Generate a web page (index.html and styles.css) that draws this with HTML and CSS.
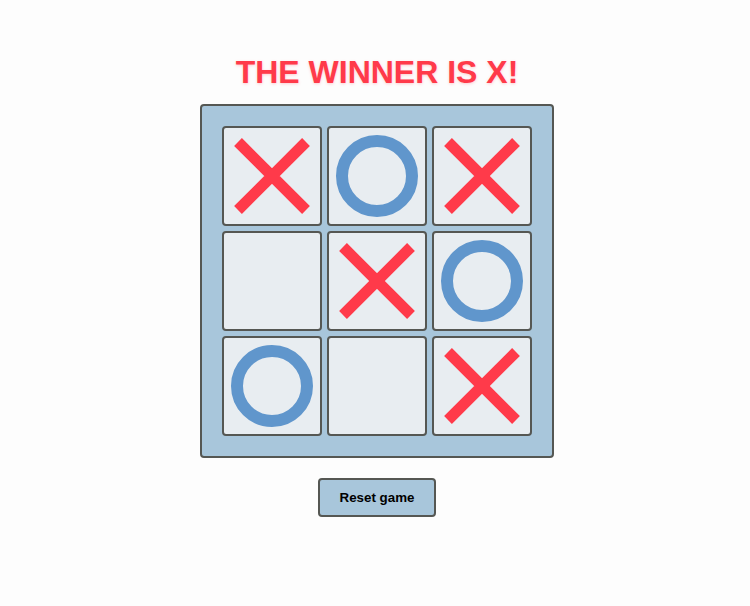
FILE: index.html
```html
<!DOCTYPE html>
<html>
<head>
<meta charset="utf-8">
<link rel="stylesheet" href="styles.css">
</head>
<body>
<main class="game">
  <h1 class="status">THE WINNER IS X!</h1>
  <div class="board">
    <div class="cell"><svg class="mark" viewBox="0 0 96 96"><path class="x" d="M14 14L82 82M82 14L14 82"/></svg></div>
    <div class="cell"><svg class="mark" viewBox="0 0 96 96"><circle class="o" cx="48" cy="48" r="35"/></svg></div>
    <div class="cell"><svg class="mark" viewBox="0 0 96 96"><path class="x" d="M14 14L82 82M82 14L14 82"/></svg></div>
    <div class="cell"></div>
    <div class="cell"><svg class="mark" viewBox="0 0 96 96"><path class="x" d="M14 14L82 82M82 14L14 82"/></svg></div>
    <div class="cell"><svg class="mark" viewBox="0 0 96 96"><circle class="o" cx="48" cy="48" r="35"/></svg></div>
    <div class="cell"><svg class="mark" viewBox="0 0 96 96"><circle class="o" cx="48" cy="48" r="35"/></svg></div>
    <div class="cell"></div>
    <div class="cell"><svg class="mark" viewBox="0 0 96 96"><path class="x" d="M14 14L82 82M82 14L14 82"/></svg></div>
  </div>
  <button class="reset">Reset game</button>
</main>
</body>
</html>
```
FILE: styles.css
```css
html, body {
  margin: 0;
  padding: 0;
  background: #fdfdfd;
  font-family: "Liberation Sans", Arial, sans-serif;
}
.game {
  display: flex;
  flex-direction: column;
  align-items: center;
  padding-top: 54px;
  padding-left: 4px;
}
.status {
  margin: 0 0 13px;
  font-size: 32px;
  line-height: 37px;
  font-weight: bold;
  color: #ff3a4a;
  text-shadow: 0 1px 3px rgba(255, 58, 74, 0.25);
}
.board {
  display: grid;
  grid-template-columns: repeat(3, 100px);
  grid-template-rows: repeat(3, 100px);
  gap: 5px;
  padding: 20px;
  background: #a8c6db;
  border: 2px solid #555753;
  border-radius: 4px;
}
.cell {
  box-sizing: border-box;
  width: 100px;
  height: 100px;
  background: #e8edf1;
  border: 2px solid #555753;
  border-radius: 4px;
}
.mark {
  display: block;
  width: 96px;
  height: 96px;
}
.x {
  fill: none;
  stroke: #ff3a4a;
  stroke-width: 11;
}
.o {
  fill: none;
  stroke: #6096cc;
  stroke-width: 12;
}
.reset {
  margin-top: 20px;
  box-sizing: border-box;
  width: 118px;
  height: 39px;
  background: #a8c6db;
  border: 2px solid #555753;
  border-radius: 4px;
  font-family: "Liberation Sans", Arial, sans-serif;
  font-size: 13.333px;
  font-weight: bold;
  color: #000;
  padding: 0;
}
```
